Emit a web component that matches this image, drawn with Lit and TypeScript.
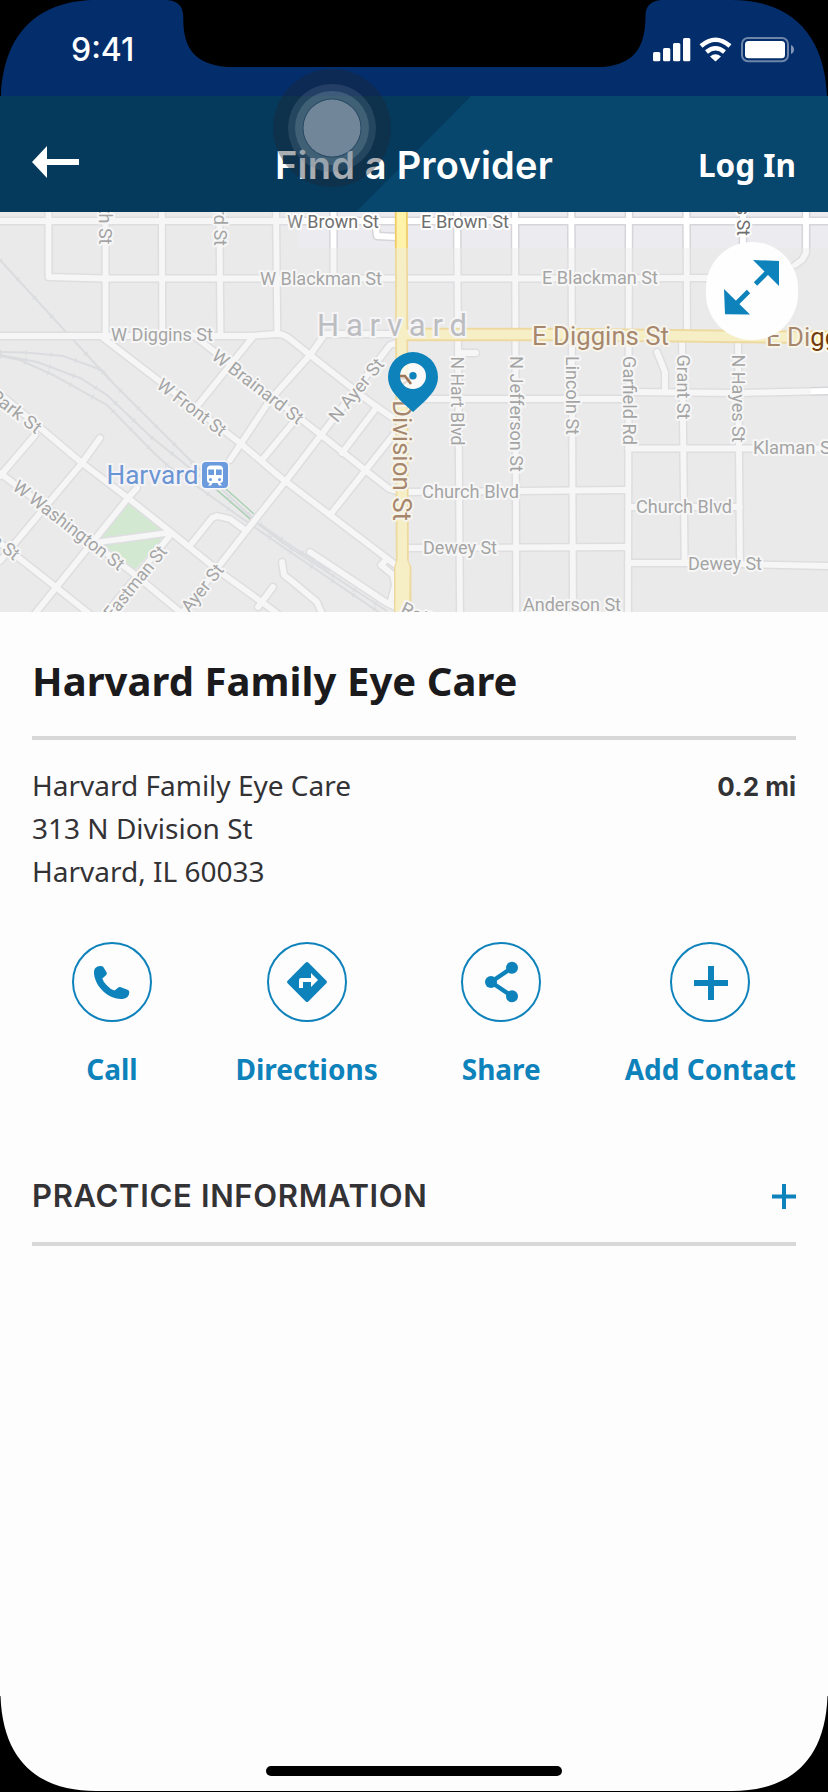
import { LitElement, html, svg, css } from "lit";
import { customElement } from "lit/decorators.js";

const MINOR_ROADS = [
  "M0 221H828",
  "M48.5 206V277L105 278.5H548L711 278",
  "M0 336H250L277 334",
  "M105.5 206V336",
  "M161.8 206L162.3 336",
  "M219.3 206L220.5 336",
  "M276 206L277.3 334",
  "M277 334Q284 334 290 339L310 355L370 402L400 423",
  "M398 334H325L310 355L270 400L230 460",
  "M333.5 206V278",
  "M457 206L460 612",
  "M515 206L516.3 612",
  "M571.3 206L573 612",
  "M629 206L628 612",
  "M686.5 206L687 336",
  "M682 341L684.7 563",
  "M743 206V300",
  "M738 342L740 563",
  "M806 206V253L802 260L795 265",
  "M375 221L377 236L397 237",
  "M458 353H476",
  "M425 399H627",
  "M628 392L740 393L828 391",
  "M657 352L665 372V392",
  "M320 434L365 470L388 488Q393 491 402 492L516 491L627 490",
  "M193 335L320 434",
  "M630 507H740",
  "M407 548L516 547.5L628 547",
  "M628 563H690L828 566",
  "M628 448.5H828",
  "M102 337L240 443L280 477L397 566",
  "M397 343L390 345L285 482L247 530L183 612",
  "M252 338L198 405",
  "M295 420L262 460",
  "M377 407L342 453",
  "M395 433L330 515",
  "M0 394L82 463L128 498L172 533L220 572L270 608L280 616",
  "M0 473L133 573L185 616",
  "M0 543L57 588L92 616",
  "M35 435L0 476",
  "M100 438L82 463L0 561",
  "M137 488L128 498L34 615",
  "M100 542L167 533",
  "M172 533L105 615",
  "M192 543L212 518L217 516L230 519L245 530",
  "M273 587L258 607",
  "M310 552L387 603L402 610",
  "M282 562L284 575L293 582L317 602L322 614",
  "M386 560L381 565L393 575L395 585L390 604",
];

const RAILS = [
  "M0 260L110 380L192 462L253 518",
  "M0 352L25 352.500L63 356L102 370L112 382",
  "M0 355L37 362L80 378L107 395L150 436L180 460L253 520L283 543L387 611",
  "M0 356L20 360L53 375L107 405L153 452L167 465L250 524L283 547L380 613",
  "M260 524L284 541L330 571",
];

type Straight = [string, number, number, number];
const STREETS: Straight[] = [
  ["W Brown St", 287, 227.700, 92],
  ["E Brown St", 421, 227.700, 88],
  ["W Blackman St", 260, 284.500, 122],
  ["E Blackman St", 542, 283.500, 116],
  ["W Diggins St", 111, 341, 102],
  ["Klaman St", 753, 454, 84],
  ["Church Blvd", 422, 498, 97],
  ["Church Blvd", 636, 513, 96],
  ["Dewey St", 423, 554, 74],
  ["Dewey St", 688, 570, 74],
  ["Anderson St", 523, 610.500, 98],
];

type Turned = [string, number, number, number, number];
const TURNED: Turned[] = [
  ["N Hart Blvd", 457.5, 401, 90, 89],
  ["N Jefferson St", 516, 414, 90, 116],
  ["Lincoln St", 572, 395.5, 90, 79],
  ["Garfield Rd", 629, 400.500, 90, 89],
  ["Grant St", 683, 387, 90, 65],
  ["N Hayes St", 738.5, 398.5, 90, 88],
  ["W Front St", 192, 407, 37.5, 82],
  ["W Brainard St", 258, 386.500, 37.5, 110],
  ["N Ayer St", 356, 390, -51, 76],
  ["Park St", 16, 411, 37.5, 60],
  ["W Washington St", 69, 525, 37.5, 135],
  ["Eastman St", 135, 582, -51, 88],
  ["Ayer St", 202, 588, -51, 56],
  ["Railroad St", 443, 626, 25, 90],
];

type Cut = [string, number, number, number];
const CUT_OFF: Cut[] = [
  ["4th St", 105.500, 244.500, 90],
  ["3rd St", 220, 246, 90],
  ["Hayes St", 743, 236, 90],
  ["Jackson St", 18, 556, 37.5],
];

@customElement("street-map")
export class StreetMap extends LitElement {
  static styles = css`
    :host { display: block; height: 400px; position: relative; overflow: hidden; }
    svg { display: block; }
    .casing { fill: none; stroke: #d5d5da; stroke-width: 8.8; stroke-linejoin: round; stroke-linecap: round; }
    .road { fill: none; stroke: #fff; stroke-width: 5.8; stroke-linejoin: round; stroke-linecap: round; }
    .rail { fill: none; stroke: #ced2d6; stroke-width: 2; }
    .ties { fill: none; stroke: #ced2d6; stroke-width: 5; stroke-dasharray: 1.3 24; }
    .yellow-casing { fill: none; stroke: #f0cd69; }
    .yellow { fill: none; stroke: #fff3a9; }
    .label { font: 400 18px Roboto, sans-serif; fill: #6f6f6f; stroke: #fff; stroke-width: 4; stroke-linejoin: round; paint-order: stroke; }
    .major { font: 400 25px Roboto, sans-serif; fill: #743c0c; stroke: #fffbea; stroke-width: 4; stroke-linejoin: round; paint-order: stroke; }
    .city { font: 400 31px Roboto, sans-serif; fill: #bcbdc1; stroke: #f5f4f6; stroke-width: 4; paint-order: stroke; }
    .station { font: 400 25px Roboto, sans-serif; fill: #6a95d4; stroke: #f4f3f6; stroke-width: 4; paint-order: stroke; }
    .expand { position: absolute; left: 706px; top: 30px; width: 92px; height: 98px; border: 0; padding: 0; border-radius: 46px; background: #fffefe; }
  `;

  render() {
    return html`
      <svg width="828" height="400" viewBox="0 212 828 400">
        <defs>
          <linearGradient id="fade" x1="280" x2="306" y1="0" y2="0" gradientUnits="userSpaceOnUse">
            <stop offset="0" stop-color="#ebeaeb" stop-opacity=".43" />
            <stop offset="1" stop-color="#ebeaeb" stop-opacity="0" />
          </linearGradient>
        </defs>
        <rect x="0" y="212" width="828" height="400" fill="#ebeaeb" />
        <rect x="298" y="212" width="530" height="36" fill="#ecebef" />
        <path d="M128 501L162 530L98 538ZM104 544L164 537L133 572Z" fill="#c0e6bd" />
        ${RAILS.map((d) => svg`<path class="rail" d=${d} /><path class="ties" d=${d} />`)}
        <path d="M226 489L254 514M217 490L250 519" stroke="#74bd83" stroke-width="1.300" />
        ${MINOR_ROADS.map((d) => svg`<path class="casing" d=${d} />`)}
        ${MINOR_ROADS.map((d) => svg`<path class="road" d=${d} />`)}
        <path class="yellow-casing" stroke-width="13.600" d="M402 334.500L560 334.500L828 337.500" />
        <path class="yellow-casing" stroke-width="13" d="M401.300 206L402.300 566" />
        <path d="M396 562H409L411.500 567V612H394V567Z" fill="#f0cd69" />
        <path class="yellow" stroke-width="9.400" d="M401 334.500L560 334.500L828 337.500" />
        <path class="yellow" stroke-width="9.400" d="M401.300 206L402.300 566" />
        <path d="M397.600 560H407L409.700 567L409 612H395.500V567Z" fill="#fff3a9" />
        ${STREETS.map(([t, x, y, w]) => svg`<text class="label" x=${x} y=${y} textLength=${w} lengthAdjust="spacingAndGlyphs">${t}</text>`)}
        ${TURNED.map(([t, x, y, a, w]) => svg`<text class="label" text-anchor="middle" dy=".36em" textLength=${w} lengthAdjust="spacingAndGlyphs" transform="translate(${x} ${y}) rotate(${a})">${t}</text>`)}
        ${CUT_OFF.map(([t, x, y, a]) => svg`<text class="label" text-anchor="end" dy=".36em" transform="translate(${x} ${y}) rotate(${a})">${t}</text>`)}
        <text class="major" x="532" y="344.500" textLength="137" lengthAdjust="spacingAndGlyphs">E Diggins St</text>
        <text class="major" x="766" y="346" textLength="137" lengthAdjust="spacingAndGlyphs">E Diggins St</text>
        <text class="major" transform="translate(393 375) rotate(90)" textLength="146" lengthAdjust="spacingAndGlyphs">N Division St</text>
        <path d="M0 212H280V248H811V400H828V612H0Z" fill="#ebeaeb" fill-opacity=".43" />
        <rect x="280" y="212" width="26" height="36" fill="url(#fade)" />
        <text class="city" x="317" y="336" textLength="150" lengthAdjust="spacing">Harvard</text>
        <text class="station" x="106.500" y="483.500" textLength="92" lengthAdjust="spacingAndGlyphs">Harvard</text>
        <rect x="200.500" y="460.500" width="29" height="29" rx="5" fill="#f7f7f9" />
        <rect x="202" y="462" width="26" height="26" rx="4" fill="#6b9bdd" />
        <path d="M211 465.500H219Q223 465.500 223 469V480Q223 483 220 483L222 485.500H219L217.500 483H212.500L211 485.500H208L210 483Q207 483 207 480V469Q207 465.500 211 465.500Z" fill="#fff" />
        <path d="M208.300 469.500H214V475H208.300ZM216 469.500H221.700V475H216Z" fill="#6b9bdd" />
        <circle cx="210.500" cy="479.500" r="1.500" fill="#6b9bdd" /><circle cx="219.500" cy="479.500" r="1.500" fill="#6b9bdd" />
        <circle cx="413" cy="376" r="14" fill="#fff" fill-opacity=".7" />
        <path d="M400 376H405L411 384" fill="none" stroke="#9d7758" stroke-width="2.600" />
        <path fill="#0e82bb" fill-rule="evenodd" d="M413 352A25 25 0 0 1 438 377C438 388 430 396 424 402L413 412L402 402C396 396 388 388 388 377A25 25 0 0 1 413 352ZM413 363A13 13 0 1 0 413 389A13 13 0 1 0 413 363Z" />
        <circle cx="413" cy="375.700" r="3.700" fill="#0e82bb" />
      </svg>
      <button class="expand" aria-label="Expand map">
        <svg width="92" height="98" viewBox="706 242 92 98">
          <path d="M753 260L779 261V286ZM724 289L750 314.500L725 314.200Z" fill="#0e82bb" />
          <path d="M755.500 284L770 269.500M748.500 291.500L734 306" stroke="#0e82bb" stroke-width="4.800" />
        </svg>
      </button>
    `;
  }
}

const ACTIONS = [
  { label: "Call", icon: svg`<path d="M22 29.500Q22.300 24.600 28 24Q30.500 23.700 31.500 25.300L34.500 30.300Q35.600 32 34 33.300L30.300 36.500Q31.500 40.500 35 43.500Q38.500 47.500 42.500 48.500L46 45.700Q47.300 44.700 49 45.300L55.500 47.800Q57.600 48.500 57.300 50.500Q57 56.500 50.500 56.900C36 58 21.500 43 22 29.500Z" />` },
  { label: "Directions", icon: svg`<path fill-rule="evenodd" d="M41.300 20.600L59.400 38.700Q60.700 40 59.400 41.300L41.300 59.400Q40 60.700 38.700 59.400L20.600 41.300Q19.300 40 20.600 38.700L38.700 20.600Q40 19.300 41.300 20.600ZM44 31V36H34Q32 36 32 38V46H36V40H44V45L51 38Z" />` },
  { label: "Share", icon: svg`<path d="M51 25.800L30 40L51 54.200" fill="none" stroke="#0e82bb" stroke-width="4.300" /><circle cx="51" cy="25.800" r="6" /><circle cx="30" cy="40" r="6" /><circle cx="51" cy="54.200" r="6" />` },
  { label: "Add Contact", icon: svg`<path d="M38 24h6v14h14v6H44v14h-6V44H24v-6H38z" />` },
];

@customElement("app-root")
export class AppRoot extends LitElement {
  static styles = css`
    :host { display: block; font-family: "Noto Sans", sans-serif; color: #333235; }
    * { box-sizing: border-box; }
    .screen { position: relative; display: flex; flex-direction: column; height: 1792px; width: 828px; background: #fefdfe; overflow: hidden; }
    .status { height: 96px; background: #042e6b; display: flex; justify-content: space-between; padding: 30px 33px 0 71px; color: #fff; }
    .time { font: 500 32px/40px Inter, sans-serif; }
    .indicators { display: block; margin-top: 4px; }
    .nav { height: 116px; background: #053a5c; position: relative; color: #fff; display: grid; grid-template-columns: 1fr auto 1fr; align-items: center; padding: 21px 32px 0 32px; }
    .facet { position: absolute; inset: 0; background: #07466d; clip-path: polygon(471px 0, 100% 0, 100% 100%, 356px 100%); }
    .back { display: block; position: relative; margin-bottom: 5px; }
    .title { position: relative; margin: 0; font: 600 38px/44px Inter, sans-serif; letter-spacing: 0.2px; white-space: nowrap; }
    .login { position: relative; justify-self: end; font-weight: 700; font-size: 31.5px; line-height: 42px; padding-top: 1px; }
    .details { padding: 0 32px; }
    h2 { margin: 0; padding-top: 41px; height: 128px; border-bottom: 4px solid #d9d8d9; color: #1b1a1d; font-size: 40px; line-height: 56px; font-weight: 700; letter-spacing: 0.06px; white-space: nowrap; }
    .office { display: flex; justify-content: space-between; padding-top: 24px; }
    .address { font-style: normal; font-size: 28px; line-height: 43px; }
    .distance { font: 700 26px/45px Inter, sans-serif; }
    .actions { display: flex; justify-content: space-between; padding: 49px 0 0 40px; color: #0e82bb; }
    .action { display: flex; flex-direction: column; align-items: center; min-width: 80px; font-size: 28px; line-height: 38px; font-weight: 700; gap: 28px; white-space: nowrap; }
    .ring { width: 80px; height: 80px; border: 2px solid #0e82bb; border-radius: 50%; display: grid; place-items: center; }
    .ring svg { margin: -2px; fill: #0e82bb; }
    .section { display: flex; justify-content: space-between; align-items: center; height: 101px; margin-top: 57px; padding-top: 5px; border-bottom: 4px solid #d9d8d9; }
    .section h3 { margin: 0; font: 600 31px/36px Inter, sans-serif; letter-spacing: 0.67px; }
    .touch, .frame { position: absolute; pointer-events: none; }
    .touch { left: 272px; top: 68px; }
    .frame { left: 0; top: 0; }
    .home { position: absolute; left: 266px; bottom: 16px; width: 296px; height: 10px; border-radius: 5px; background: #000; }
  `;

  render() {
    return html`
      <div class="screen">
        <div class="status">
          <span class="time">9:41</span>
          <svg class="indicators" width="142" height="32" viewBox="653 34 142 32" fill="#fff">
            <rect x="653" y="52" width="7.300" height="9.200" rx="1.500" />
            <rect x="663" y="48" width="7.300" height="13.200" rx="1.500" />
            <rect x="673" y="43" width="7.300" height="18.200" rx="1.500" />
            <rect x="683" y="38" width="7.300" height="23.200" rx="1.500" />
            <g fill="none" stroke="#fff" stroke-width="4.500">
              <path d="M701 46Q715.500 33.500 730 46" />
              <path d="M706.500 52Q715.500 44.500 724.500 52" />
            </g>
            <path d="M710 56.500Q715.500 52 721 56.500L715.500 61.500Z" />
            <rect x="742" y="38" width="46" height="23.200" rx="6" fill="none" stroke="#fff" stroke-opacity=".42" stroke-width="2" />
            <rect x="745" y="41" width="40" height="17.300" rx="3.500" />
            <path d="M791 45Q794 46.500 794 49.500Q794 52.500 791 54Z" fill-opacity=".5" />
          </svg>
        </div>
        <header class="nav">
          <div class="facet"></div>
          <svg class="back" width="48" height="34" viewBox="32 145 48 34" fill="#fff"><path d="M32 162L47 146V159H79V165H47V178Z" /></svg>
          <h1 class="title">Find a Provider</h1>
          <span class="login">Log In</span>
        </header>
        <street-map></street-map>
        <main class="details">
          <h2>Harvard Family Eye Care</h2>
          <div class="office">
            <address class="address">Harvard Family Eye Care<br />313 N Division St<br />Harvard, IL 60033</address>
            <span class="distance">0.2 mi</span>
          </div>
          <div class="actions">
            ${ACTIONS.map((a) => html`<div class="action"><div class="ring"><svg width="80" height="80" viewBox="0 0 80 80">${a.icon}</svg></div>${a.label}</div>`)}
          </div>
          <div class="section">
            <h3>PRACTICE INFORMATION</h3>
            <svg width="24" height="25" viewBox="0 0 24 25" fill="#0e82bb"><path d="M10 0h4v10.500h10v4H14V25h-4V14.500H0v-4h10z" /></svg>
          </div>
        </main>
        <svg class="touch" width="120" height="120" viewBox="-60 -60 120 120">
          <circle r="59" fill="#1c2531" fill-opacity=".38" />
          <circle r="44" fill="#6d87a0" fill-opacity=".24" />
          <circle r="37" fill="#8ea5b5" fill-opacity=".27" />
          <circle r="29.500" fill="#1d3f5b" fill-opacity=".7" />
          <circle r="28.500" fill="#7c90a1" fill-opacity=".88" />
        </svg>
        <svg class="frame" width="828" height="1792" viewBox="0 0 828 1792">
          <path d="M0 0H96C48 0 4 24 1 96H0ZM828 0H732C780 0 824 24 827 96H828ZM167 0C178 1 183 6 183.300 17C183 43 190 64 227 67H603C638 64 645 43 645.500 17C645 6 651 1 661 0ZM0 1696H.5C3 1768 46 1791 96 1791H732C782 1791 825 1768 827.500 1696H828V1792H0Z" />
        </svg>
        <div class="home"></div>
      </div>
    `;
  }
}
